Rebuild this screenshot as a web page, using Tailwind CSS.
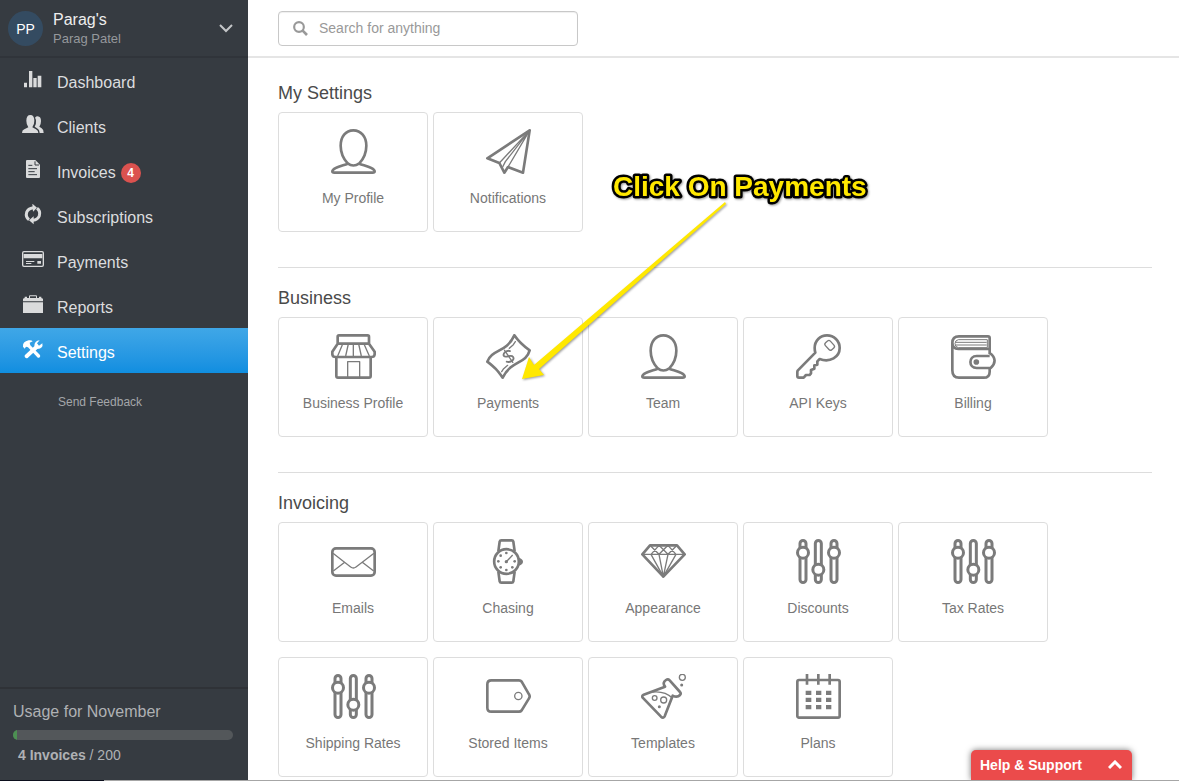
<!DOCTYPE html>
<html lang="en">
<head>
<meta charset="utf-8">
<title>Settings</title>
<script src="https://cdn.jsdelivr.net/npm/@tailwindcss/browser@4"></script>
</head>
<body class="relative flex h-screen flex-col overflow-hidden bg-white font-['Liberation_Sans',Arial,sans-serif] text-[#777]">

<svg class="hidden" aria-hidden="true">
  <symbol id="person" viewBox="0 0 135 135"><g fill="none" stroke="#7b7b7b" stroke-width="8"><path d="M67 4C44 4 29 23 29 50c0 21 10 41 21 53q17 13 35 0c11-12 21-32 21-53C106 23 90 4 67 4Z"/><path d="M50 104C35 110 4 116 4 127q0 4 6 4h115q6 0 6-4c0-11-31-17-46-23"/></g></symbol>
  <symbol id="plane" viewBox="0 0 135 135"><g fill="none" stroke="#7b7b7b" stroke-width="8" stroke-linejoin="round"><path d="M131 4 4 88l36 14 15 29 11-17 45 17Z"/><path stroke-width="4" d="M131 4 40 102M131 4 66 114M131 4 58 98l-8 16"/></g></symbol>
  <symbol id="shop" viewBox="0 0 135 135"><g fill="none" stroke="#7b7b7b" stroke-width="8" stroke-linejoin="round"><path d="M20 29V8q0-4 4-4h86q4 0 4 4v21ZM20 29 4 53v8q1 8 10 8h107q9 0 10-8v-8L114 29M16 69v57q0 5 5 5h93q5 0 5-5V69"/><path stroke-width="4" d="M35 30 20 66M52 30l-8 36M67 30v36M83 30l8 36M99 30l16 36M50 131V83h36v48"/></g></symbol>
  <symbol id="bill" viewBox="0 0 135 135"><g fill="none" stroke="#7b7b7b" stroke-width="8" stroke-linejoin="round" stroke-linecap="round"><path d="M85 4Q103 30 131 49C119 92 78 76 50 131 33 107 27 101 4 83 18 44 60 58 85 4Z"/><path stroke-width="4" d="m88 23-6 9-12 11M65 94l-12 10-6 9"/><g transform="rotate(-34 68 67)" stroke-width="5.500"><path d="M80 56c-5-8-23-7-23 2s21 7 21 18-18 9-24 1"/><path stroke-width="4" d="M68 45v44"/></g></g></symbol>
  <symbol id="key" viewBox="0 0 135 135"><g fill="none" stroke="#7b7b7b" stroke-width="8" stroke-linejoin="round"><path d="M58 56 5 110q-1 2-1 5v11q0 5 5 5h14l7-8h11l4-5v-10l10-4V94l9-2V82l7-7C102 87 131 69 131 42 131 21 114 4 93 4S56 21 56 42q0 8 2 14Z"/><rect stroke-width="4" x="87" y="24" width="28" height="20" rx="6" transform="rotate(48 101 34)"/></g></symbol>
  <symbol id="wallet" viewBox="0 0 135 135"><g fill="none" stroke="#7b7b7b" stroke-width="8" stroke-linejoin="round"><path d="M116 60V12q0-5-5-5H24Q4 7 4 27v82q0 22 20 22h74q18 0 18-18v-11M4 25q0 20 18 20h94"/><path d="M116 66H77c-25 0-25 36 0 36h42c16-14 16-32-3-45"/><path stroke-width="3" d="M109 41V17H22q-10 2-10 12 0 10 10 12ZM14 25h93M14 33h93"/></g><circle cx="76" cy="84" r="8.500" fill="#7b7b7b"/></symbol>
  <symbol id="mail" viewBox="0 0 135 135"><g fill="none" stroke="#7b7b7b"><rect stroke-width="8" x="4" y="28" width="127" height="82" rx="11"/><path stroke-width="4" d="m6 43 53 41q8 6 16 0l54-41M7 96l34-26M128 96 94 70"/></g></symbol>
  <symbol id="watch" viewBox="0 0 135 135"><g fill="none" stroke="#7b7b7b" stroke-width="8" stroke-linejoin="round"><circle cx="61.500" cy="67.500" r="37"/><path d="m37 37 4-29q1-4 5-4h31q4 0 5 4l4 29M37 98l4 29q1 4 5 4h31q4 0 5-4l4-29"/><path stroke-width="4" d="m61 68 19-20"/></g><g fill="#7b7b7b"><path d="M99 56q12 4 12 12t-12 12Z"/><circle cx="61" cy="68" r="5"/><circle cx="61" cy="42" r="4"/><circle cx="61" cy="93" r="4"/><circle cx="37" cy="67" r="4"/><circle cx="86" cy="67" r="4"/><circle cx="44" cy="50" r="4"/><circle cx="44" cy="85" r="4"/><circle cx="79" cy="85" r="4"/></g></symbol>
  <symbol id="gem" viewBox="0 0 135 135"><g fill="none" stroke="#7b7b7b" stroke-width="8" stroke-linejoin="round"><path d="M27 19h81l23 27-64 67L4 46Z"/><path stroke-width="4" d="M4 46h127M30 46l37 67 38-67M54 46l13 67 14-67M27 19l27 27 27-27 24 27M30 46l24-27 27 27 27-27"/></g></symbol>
  <symbol id="sliders" viewBox="0 0 135 135"><g fill="#fff" stroke="#7b7b7b" stroke-width="9"><rect x="12" y="4.500" width="18" height="126" rx="9"/><rect x="58" y="4.500" width="18" height="126" rx="9"/><rect x="105" y="4.500" width="18" height="126" rx="9"/><circle cx="21" cy="41" r="16.500"/><circle cx="67" cy="92" r="16.500"/><circle cx="114" cy="41" r="16.500"/></g></symbol>
  <symbol id="tag" viewBox="0 0 135 135"><g fill="none" stroke="#7b7b7b" stroke-width="8" stroke-linejoin="round"><path d="M16 19h83q5 0 8 4l22 38q4 6 0 12l-22 36q-3 4-8 4H16q-12 0-12-12V31q0-12 12-12Z"/><circle stroke-width="4" cx="97" cy="66" r="11"/></g></symbol>
  <symbol id="flask" viewBox="0 0 135 135"><g fill="none" stroke="#7b7b7b" stroke-width="8" stroke-linejoin="round"><path d="M72 38 8 62q-6 3-3 9l55 57q7 6 11-1l24-62q14 7 22-2 4-5 0-9L86 19q-5-5-11-1-12 8-3 20Z"/><path stroke-width="4" d="M34 54q38-4 60 18"/><g stroke-width="4"><circle cx="41" cy="72" r="7"/><circle cx="68" cy="78" r="9"/><circle cx="124" cy="10" r="9"/></g></g><g fill="#7b7b7b"><circle cx="55" cy="98" r="4.500"/><circle cx="122" cy="33" r="4.500"/></g></symbol>
  <symbol id="calendar" viewBox="0 0 135 135"><g fill="none" stroke="#7b7b7b" stroke-width="8"><rect x="4" y="18" width="127" height="113" rx="5"/><path d="M33 0v32M67 0v32M101 0v32"/></g><path fill="#7b7b7b" d="M29 50h17v13H29zM60 50h16v13H60zM90 50h16v13H90zM29 71h17v13H29zM60 71h16v13H60zM90 71h16v13H90zM29 93h17v13H29zM60 93h16v13H60zM90 93h16v13H90z"/></symbol>
</svg>

<div class="flex min-h-0 flex-1">
  <aside class="flex w-[248px] shrink-0 flex-col bg-[#363b41] text-[#dcdddf]">
    <button type="button" class="flex h-[58px] shrink-0 items-center border-b-2 border-[#30343a] pl-2 pr-[15px] text-left">
      <span class="flex size-[35px] items-center justify-center rounded-full bg-[#344b61] pt-[2px] text-sm text-white">PP</span>
      <span class="ml-[10px] flex flex-1 flex-col pt-[2px]">
        <span class="text-base leading-5 text-[#eee]">Parag's</span>
        <span class="text-[13px] leading-[18px] text-[#95989c]">Parag Patel</span>
      </span>
      <svg class="h-[10px] w-[14px]" viewBox="0 0 14 10" fill="none" stroke="#c4c6c8" stroke-width="2"><path d="m1 2 6 6 6-6"/></svg>
    </button>
    <nav class="flex flex-col text-base">
      <a href="#" class="flex h-[45px] items-center gap-[13px] pl-[22px]"><svg class="mb-px size-[22px]" viewBox="0 0 66 66" fill="#dadbdc"><path d="M6 41h9v14H6zM21 6h10v49H21zM34 27h10v28H34zM47 20h11v35H47z"/></svg><span class="pt-1">Dashboard</span></a>
      <a href="#" class="flex h-[45px] items-center gap-[13px] pl-[22px]"><svg class="mb-px size-[22px]" viewBox="0 0 66 66" fill="#dadbdc"><path d="M0 57q0-9 7-11l12-6q-6-8-6-20Q13 3 25 3t12 17q0 12-6 20l11 6q7 3 7 11Z"/><path d="M38 38q5-6 4-18 0-5-3-9 3-4 8-4 10 1 10 14 0 11-5 17l7 5q6 3 6 14H53q0-10-8-14Z"/></svg><span class="pt-1">Clients</span></a>
      <a href="#" class="flex h-[45px] items-center gap-[13px] pl-[22px]"><svg class="mb-px size-[22px]" viewBox="0 0 66 66"><path fill="#dadbdc" d="M15 3h25l14 14v37q0 3-3 3H15q-3 0-3-3V6q0-3 3-3Z"/><path fill="none" stroke="#363b41" stroke-width="3" d="M39 7v11h12M19 19h12M19 29h26M19 38h19M19 47h26"/></svg><span class="pt-1">Invoices</span><span class="-ml-2 mt-1 flex size-5 items-center justify-center rounded-full bg-[#db524f] text-xs font-bold text-white">4</span></a>
      <a href="#" class="flex h-[45px] items-center gap-[13px] pl-[22px]"><svg class="mb-px size-[22px]" viewBox="0 0 66 66"><g fill="none" stroke="#dadbdc" stroke-width="9"><path d="M21 47Q10 39 14 25 18 13 34 11M45 13q11 8 7 22-4 12-20 14"/></g><path fill="#dadbdc" d="M31-1 45 11 33 23ZM35 37v24L21 49Z"/></svg><span class="pt-1">Subscriptions</span></a>
      <a href="#" class="flex h-[45px] items-center gap-[13px] pl-[22px]"><svg class="mb-px size-[22px]" viewBox="0 0 66 66"><rect x="2" y="8" width="62" height="44" rx="4" fill="none" stroke="#dadbdc" stroke-width="4"/><path fill="#dadbdc" d="M5 15h56v13H5zM12 36h25v3H12zM12 42h16v3H12zM46 36h11v8H46z"/></svg><span class="pt-1">Payments</span></a>
      <a href="#" class="flex h-[45px] items-center gap-[13px] pl-[22px]"><svg class="mb-px size-[22px]" viewBox="0 0 66 66"><path fill="#dadbdc" d="M3 25h60v32H3zM3 22v-8l5-2V8h7v4h6V7q0-3 3-3h18q3 0 3 3v5h6V8h7v4l5 2v8ZM24 12h18V7H24Z" fill-rule="evenodd"/></svg><span class="pt-1">Reports</span></a>
      <a href="#" class="flex h-[45px] items-center gap-[13px] bg-linear-to-b from-[#3fa7e7] to-[#0f8ee0] pl-[22px] text-white"><svg class="mb-px size-[22px]" viewBox="0 0 66 66" fill="#fff"><path d="M3 23q-2-15 17-19 9-1 12 3l-9 4 2 8 29 29q2 4-1 7-4 3-7 0L18 25l-6-2-4 6Z"/><path d="M61 13q4 16-15 17L17 57q-5 2-8-2-3-4 0-7l28-26Q37 5 53 4l-8 9 6 7Z"/></svg><span class="pt-1">Settings</span></a>
      <a href="#" class="mt-5 pl-[58px] text-xs leading-[18px] text-[#a4a6a9]">Send Feedback</a>
    </nav>
    <section class="mt-auto border-t-2 border-[#2f3237] px-[13px] pb-[15px] pt-3 text-[#afb1b4]">
      <h2 id="usage" class="text-base leading-[22px]">Usage for November</h2>
      <div role="progressbar" aria-labelledby="usage" aria-valuenow="4" aria-valuemax="200" class="mr-[2px] mt-[7px] h-[10px] overflow-hidden rounded-full bg-[#53575a]"><div class="h-full bg-[#4c9052]" style="width:2%"></div></div>
      <p class="ml-[5px] mt-[5px] text-sm leading-5"><b>4 Invoices</b> / 200</p>
    </section>
  </aside>

  <main class="min-w-0 flex-1 overflow-hidden">
    <header class="flex h-[58px] items-center border-b-2 border-[#e5e5e5] pl-[30px]">
      <label class="flex h-[35px] w-[300px] items-center rounded-[4px] border border-[#c8c8c8] pl-[14px] shadow-[inset_0_1px_1px_#0001]">
        <svg class="size-[15px]" viewBox="0 0 45 45" fill="none" stroke="#999"><circle cx="18" cy="18" r="14.500" stroke-width="6.500"/><path d="m29 29 13 13" stroke-width="8"/></svg>
        <input type="search" aria-label="Search" placeholder="Search for anything" class="ml-[11px] min-w-0 flex-1 bg-transparent text-sm outline-none placeholder:text-[#999]">
      </label>
    </header>

    <div class="pl-[30px] pr-[27px]">
      <section class="pb-[35px] pt-[21px]">
        <h2 class="mb-[5px] text-lg leading-7 text-[#4a4a4a]">My Settings</h2>
        <div class="flex flex-wrap gap-x-[5px] gap-y-[15px] text-sm">
          <a href="#" class="flex h-[120px] w-[150px] flex-col items-center gap-[14px] rounded-[4px] border border-[#ddd] pt-4"><svg class="ml-px size-[45px]"><use href="#person"/></svg>My Profile</a>
          <a href="#" class="flex h-[120px] w-[150px] flex-col items-center gap-[14px] rounded-[4px] border border-[#ddd] pt-4"><svg class="ml-px size-[45px]"><use href="#plane"/></svg>Notifications</a>
        </div>
      </section>
      <section class="border-t border-[#ddd] pb-[35px] pt-4">
        <h2 class="mb-[5px] text-lg leading-7 text-[#4a4a4a]">Business</h2>
        <div class="flex flex-wrap gap-x-[5px] gap-y-[15px] text-sm">
          <a href="#" class="flex h-[120px] w-[150px] flex-col items-center gap-[14px] rounded-[4px] border border-[#ddd] pt-4"><svg class="ml-px size-[45px]"><use href="#shop"/></svg>Business Profile</a>
          <a href="#" class="flex h-[120px] w-[150px] flex-col items-center gap-[14px] rounded-[4px] border border-[#ddd] pt-4"><svg class="ml-px size-[45px]"><use href="#bill"/></svg>Payments</a>
          <a href="#" class="flex h-[120px] w-[150px] flex-col items-center gap-[14px] rounded-[4px] border border-[#ddd] pt-4"><svg class="ml-px size-[45px]"><use href="#person"/></svg>Team</a>
          <a href="#" class="flex h-[120px] w-[150px] flex-col items-center gap-[14px] rounded-[4px] border border-[#ddd] pt-4"><svg class="ml-px size-[45px]"><use href="#key"/></svg>API Keys</a>
          <a href="#" class="flex h-[120px] w-[150px] flex-col items-center gap-[14px] rounded-[4px] border border-[#ddd] pt-4"><svg class="ml-px size-[45px]"><use href="#wallet"/></svg>Billing</a>
        </div>
      </section>
      <section class="border-t border-[#ddd] pt-4">
        <h2 class="mb-[5px] text-lg leading-7 text-[#4a4a4a]">Invoicing</h2>
        <div class="flex flex-wrap gap-x-[5px] gap-y-[15px] text-sm">
          <a href="#" class="flex h-[120px] w-[150px] flex-col items-center gap-[14px] rounded-[4px] border border-[#ddd] pt-4"><svg class="ml-px size-[45px]"><use href="#mail"/></svg>Emails</a>
          <a href="#" class="flex h-[120px] w-[150px] flex-col items-center gap-[14px] rounded-[4px] border border-[#ddd] pt-4"><svg class="ml-px size-[45px]"><use href="#watch"/></svg>Chasing</a>
          <a href="#" class="flex h-[120px] w-[150px] flex-col items-center gap-[14px] rounded-[4px] border border-[#ddd] pt-4"><svg class="ml-px size-[45px]"><use href="#gem"/></svg>Appearance</a>
          <a href="#" class="flex h-[120px] w-[150px] flex-col items-center gap-[14px] rounded-[4px] border border-[#ddd] pt-4"><svg class="ml-px size-[45px]"><use href="#sliders"/></svg>Discounts</a>
          <a href="#" class="flex h-[120px] w-[150px] flex-col items-center gap-[14px] rounded-[4px] border border-[#ddd] pt-4"><svg class="ml-px size-[45px]"><use href="#sliders"/></svg>Tax Rates</a>
          <a href="#" class="flex h-[120px] w-[150px] flex-col items-center gap-[14px] rounded-[4px] border border-[#ddd] pt-4"><svg class="ml-px size-[45px]"><use href="#sliders"/></svg>Shipping Rates</a>
          <a href="#" class="flex h-[120px] w-[150px] flex-col items-center gap-[14px] rounded-[4px] border border-[#ddd] pt-4"><svg class="ml-px size-[45px]"><use href="#tag"/></svg>Stored Items</a>
          <a href="#" class="flex h-[120px] w-[150px] flex-col items-center gap-[14px] rounded-[4px] border border-[#ddd] pt-4"><svg class="ml-px size-[45px]"><use href="#flask"/></svg>Templates</a>
          <a href="#" class="flex h-[120px] w-[150px] flex-col items-center gap-[14px] rounded-[4px] border border-[#ddd] pt-4"><svg class="ml-px size-[45px]"><use href="#calendar"/></svg>Plans</a>
        </div>
      </section>
    </div>
  </main>
</div>

<div class="relative z-10 flex h-px shrink-0 bg-[#a6a6a6]"><div class="w-[104px] bg-[#0b0e1c]"></div></div>

<button type="button" class="absolute bottom-px right-[47px] flex h-[30px] w-[161px] items-center justify-between rounded-t-[5px] bg-[#eb4b4b] pl-[9px] pr-[10px] text-sm font-bold text-white shadow-[0_0_6px_#0008]">Help &amp; Support
  <svg class="h-[10px] w-[14px]" viewBox="0 0 14 10" fill="none" stroke="#fff" stroke-width="3"><path d="m1 8 6-6 6 6"/></svg>
</button>

<!-- Callout pointing at the Payments card -->
<svg class="pointer-events-none absolute left-[518px] top-[164px] h-[224px] w-[362px] drop-shadow-[1px_1px_1px_#0006]" viewBox="518 164 362 224">
  <path fill="#ffe800" d="m725 202 1 2-187 165 5 6-22 4 7-22 5 8Z"/>
  <text x="613" y="196" class="text-[28px] font-bold [paint-order:stroke]" fill="#ffe800" stroke="#000" stroke-width="5" stroke-linejoin="round">Click On Payments</text>
</svg>
</body>
</html>
